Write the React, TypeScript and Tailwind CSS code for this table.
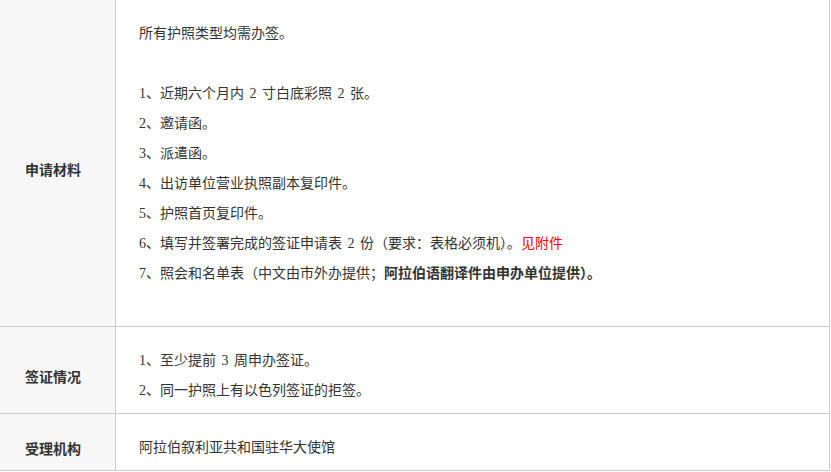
import React from "react";

const font = { fontFamily: '"Liberation Serif", "Noto Sans CJK SC", serif' };

function Row({ label, children }: { label: string; children: React.ReactNode }) {
  return (
    <div className="flex border-b border-[#cccccc]">
      <div className="w-[116px] shrink-0 bg-[#f7f7f7] border-r border-[#cccccc] flex items-center pl-[25px] pt-[19px] pb-[7px] font-bold text-[14px] text-[#333333] [font-family:'Noto_Sans_CJK_SC',sans-serif]">
        {label}
      </div>
      <div className="flex-1 pl-[23px] pt-[19px] pb-[7px] text-[14px] leading-[30px] text-[#333333] [word-spacing:2px]">
        {children}
      </div>
    </div>
  );
}

export default function App() {
  return (
    <div className="w-[831px] h-[472px] bg-white" style={font}>
      <div className="w-[830px] border-r border-[#cccccc]">
        <Row label="申请材料">
          <p>所有护照类型均需办签。</p>
          <p>&nbsp;</p>
          <p>1、近期六个月内 2 寸白底彩照 2 张。</p>
          <p>2、邀请函。</p>
          <p>3、派遣函。</p>
          <p>4、出访单位营业执照副本复印件。</p>
          <p>5、护照首页复印件。</p>
          <p>
            6、填写并签署完成的签证申请表 2 份（要求：表格必须机）。<span className="text-[#ff0000]">见附件</span>
          </p>
          <p>
            7、照会和名单表（中文由市外办提供；<span className="font-bold">阿拉伯语翻译件由申办单位提供）。</span>
          </p>
          <p>&nbsp;</p>
        </Row>
        <Row label="签证情况">
          <p>1、至少提前 3 周申办签证。</p>
          <p>2、同一护照上有以色列签证的拒签。</p>
        </Row>
        <Row label="受理机构">
          <p>阿拉伯叙利亚共和国驻华大使馆</p>
        </Row>
      </div>
    </div>
  );
}
